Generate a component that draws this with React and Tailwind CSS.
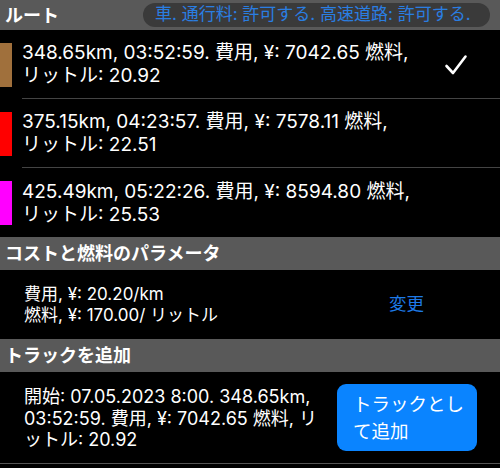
import React from "react";

const font = { fontFamily: 'Inter, "Noto Sans CJK JP", sans-serif' };

function Check() {
  return (
    <svg width="24" height="22" viewBox="0 0 24 22" fill="none">
      <path d="M2.5 12 L9 19 L21.5 2.5" stroke="white" strokeWidth="2.6" strokeLinecap="round" strokeLinejoin="round" />
    </svg>
  );
}

function RouteRow({ color, l1, l2, checked, divider }) {
  return (
    <div className="flex items-center h-[69px]">
      <div className={`w-[12px] h-[44px] shrink-0 ${color}`} />
      <div className={`flex-1 ml-[10px] h-full flex items-center justify-between ${divider ? "border-b border-[#444444]" : ""}`}>
        <div className="text-[19px] leading-[23px] text-white whitespace-nowrap">
          <div>{l1}</div>
          <div>{l2}</div>
        </div>
        {checked && (
          <div className="mr-[32px] mt-[2px]">
            <Check />
          </div>
        )}
      </div>
    </div>
  );
}

function Header({ children }) {
  return (
    <div className="h-[33px] bg-[#595959] flex items-center px-[5px] text-[18px] font-bold text-white">
      {children}
    </div>
  );
}

export default function App() {
  return (
    <div className="w-[500px] h-[468px] bg-black overflow-hidden" style={font}>
      <div className="h-[30px] bg-[#595959] flex items-center justify-between pl-[5px] pr-[10px]">
        <div className="text-[18px] font-bold text-white">ルート</div>
        <div className="h-[24px] w-[347px] rounded-full bg-[#3a3a3a] flex items-center px-[12px] text-[17px] text-[#2a7ee2] whitespace-nowrap">
          車. 通行料: 許可する. 高速道路: 許可する.
        </div>
      </div>
      <RouteRow
        color="bg-[#a0703c]"
        l1="348.65km, 03:52:59. 費用, ¥: 7042.65 燃料,"
        l2="リットル: 20.92"
        checked
        divider
      />
      <RouteRow
        color="bg-[#ff0000]"
        l1="375.15km, 04:23:57. 費用, ¥: 7578.11 燃料,"
        l2="リットル: 22.51"
        divider
      />
      <RouteRow
        color="bg-[#ff00ff]"
        l1="425.49km, 05:22:26. 費用, ¥: 8594.80 燃料,"
        l2="リットル: 25.53"
      />
      <Header>コストと燃料のパラメータ</Header>
      <div className="h-[69px] flex items-center justify-between pl-[24px]">
        <div className="text-[17px] leading-[21px] text-white whitespace-nowrap">
          <div>費用, ¥: 20.20/km</div>
          <div>燃料, ¥: 170.00/ リットル</div>
        </div>
        <div className="mr-[76px] text-[17.5px] text-[#1e7ae6]">変更</div>
      </div>
      <Header>トラックを追加</Header>
      <div className="h-[92px] flex items-center justify-between pl-[24px] border-b border-[#555555]">
        <div className="text-[18px] leading-[21.5px] text-white whitespace-nowrap mt-[2px]">
          <div>開始: 07.05.2023 8:00. 348.65km,</div>
          <div>03:52:59. 費用, ¥: 7042.65 燃料, リ</div>
          <div>ットル: 20.92</div>
        </div>
        <div className="mr-[23px] w-[140px] h-[67px] rounded-[9px] bg-[#0a84ff] text-white text-[18.5px] leading-[27px] px-[16px] flex flex-col justify-center whitespace-nowrap">
          <div>トラックとし</div>
          <div>て追加</div>
        </div>
      </div>
    </div>
  );
}
